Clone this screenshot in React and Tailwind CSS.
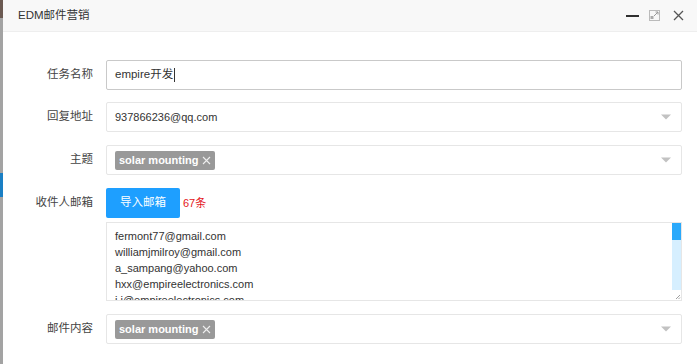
import React from "react";

const emails = [
  "fermont77@gmail.com",
  "williamjmilroy@gmail.com",
  "a_sampang@yahoo.com",
  "hxx@empireelectronics.com",
  "j.j@empireelectronics.com",
];

const Caret = () => (
  <span className="absolute right-[10px] top-1/2 -translate-y-1/2 w-0 h-0 border-l-[5px] border-r-[5px] border-t-[5px] border-l-transparent border-r-transparent border-t-[#c2c2c2]" />
);

const Tag = ({ text }) => (
  <span className="inline-flex items-center h-[19px] px-[4px] bg-[#999] text-white text-[11px] font-bold rounded-[2px]">
    {text}
    <svg width="9" height="9" viewBox="0 0 9 9" className="ml-[4px]">
      <path d="M1 1 L8 8 M8 1 L1 8" stroke="#eee" strokeWidth="1.1" />
    </svg>
  </span>
);

const Row = ({ label, children, className = "" }) => (
  <div className={`flex items-center ${className}`}>
    <div className="w-[90px] text-right text-[11.5px] text-[#444] shrink-0">{label}</div>
    <div className="ml-[13px] w-[576px]">{children}</div>
  </div>
);

const App = () => {
  return (
    <div className="flex w-[697px] h-[364px] overflow-hidden bg-white font-['Liberation_Sans','Noto_Sans_CJK_SC',sans-serif]">
      {/* backdrop edge */}
      <div className="w-[3px] shrink-0 flex flex-col bg-[#a3a3a3]">
        <div className="h-[18px] bg-[#6b5a52]" />
        <div className="h-[155px]" />
        <div className="h-[24px] bg-[#1a7fc4]" />
      </div>

      <div className="flex-1 flex flex-col">
        {/* title bar */}
        <div className="h-[32px] shrink-0 flex items-center justify-between bg-[#f8f8f8] border-b border-[#eee] pl-[15px] pr-[13px]">
          <span className="text-[11.5px] text-[#333]">EDM邮件营销</span>
          <div className="flex items-center gap-[9px]">
            <span className="block w-[13px] h-[2px] bg-[#2f2f2f]" />
            <svg width="11" height="11" viewBox="0 0 11 11" className="ml-[1px]">
              <rect x="0.5" y="0.5" width="10" height="10" fill="none" stroke="#bbb" />
              <path d="M5 6 L9 2 M6.5 2 H9 V4.5" stroke="#999" fill="none" />
              <rect x="1.5" y="6" width="3" height="3" fill="#aaa" />
            </svg>
            <svg width="11" height="11" viewBox="0 0 11 11" className="ml-[4px]">
              <path d="M1 1 L10 10 M10 1 L1 10" stroke="#555" strokeWidth="1.3" />
            </svg>
          </div>
        </div>

        <div className="pt-[28px]">
          <Row label="任务名称">
            <div className="h-[30px] border border-[#c9c9c9] rounded-[2px] flex items-center px-[8px] text-[11.5px] text-[#333]">
              empire开发<span className="inline-block w-px h-[14px] bg-[#333] ml-px" />
            </div>
          </Row>

          <Row label="回复地址" className="mt-[12px]">
            <div className="relative h-[30px] border border-[#e6e6e6] rounded-[2px] flex items-center px-[8px] text-[11px] text-[#333]">
              937866236@qq.com
              <Caret />
            </div>
          </Row>

          <Row label="主题" className="mt-[13px]">
            <div className="relative h-[30px] border border-[#e6e6e6] rounded-[2px] flex items-center px-[8px]">
              <Tag text="solar mounting" />
              <Caret />
            </div>
          </Row>

          <Row label="收件人邮箱" className="mt-[13px]">
            <div className="flex items-center">
              <button className="h-[30px] w-[74px] bg-[#1e9fff] text-white text-[11.5px] rounded-[2px]">导入邮箱</button>
              <span className="ml-[3px] text-[11px] text-[#e4161a]">67条</span>
            </div>
          </Row>

          <div className="flex mt-[4px]">
            <div className="w-[103px] shrink-0" />
            <div className="relative w-[576px] h-[79px] border border-[#e6e6e6] overflow-hidden">
              <div className="pl-[8px] pt-[5px] text-[11px] leading-[16px] text-[#333]">
                {emails.map((e) => (
                  <div key={e}>{e}</div>
                ))}
              </div>
              <div className="absolute right-0 top-0 bottom-0 w-[9px] flex flex-col bg-[#d6efff]">
                <div className="h-[17px] bg-[#2aa9fb]" />
                <div className="flex-1" />
                <div className="h-[10px] bg-white flex items-end justify-end">
                  <svg width="6" height="6" viewBox="0 0 6 6">
                    <path d="M5 1 L1 5 M5 3.5 L3.5 5" stroke="#888" strokeWidth="0.8" />
                  </svg>
                </div>
              </div>
            </div>
          </div>

          <Row label="邮件内容" className="mt-[13px]">
            <div className="relative h-[30px] border border-[#e6e6e6] rounded-[2px] flex items-center px-[8px]">
              <Tag text="solar mounting" />
              <Caret />
            </div>
          </Row>
        </div>
      </div>
    </div>
  );
};

export default App;
